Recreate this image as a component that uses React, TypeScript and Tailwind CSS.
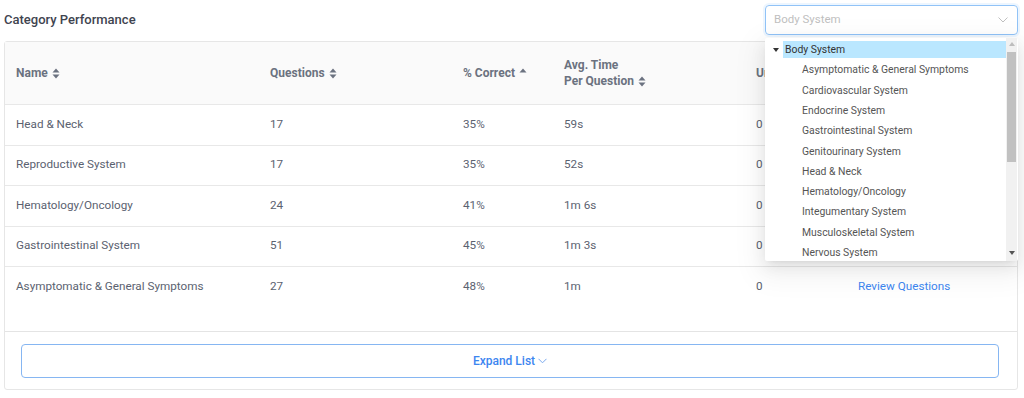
import React from "react";

const rows = [
  { name: "Head & Neck", q: "17", pct: "35%", time: "59s", un: "0" },
  { name: "Reproductive System", q: "17", pct: "35%", time: "52s", un: "0" },
  { name: "Hematology/Oncology", q: "24", pct: "41%", time: "1m 6s", un: "0" },
  { name: "Gastrointestinal System", q: "51", pct: "45%", time: "1m 3s", un: "0" },
  { name: "Asymptomatic & General Symptoms", q: "27", pct: "48%", time: "1m", un: "0" },
];

const options = [
  "Asymptomatic & General Symptoms",
  "Cardiovascular System",
  "Endocrine System",
  "Gastrointestinal System",
  "Genitourinary System",
  "Head & Neck",
  "Hematology/Oncology",
  "Integumentary System",
  "Musculoskeletal System",
  "Nervous System",
];

function SortIcon({ upOnly = false }: { upOnly?: boolean }) {
  return (
    <svg width="8" height="11" viewBox="0 0 8 11" className="ml-[4px] inline-block">
      <path d="M4 0.5 L7.5 4.5 L0.5 4.5 Z" fill="#6b7280" />
      {!upOnly && <path d="M4 10.5 L7.5 6.5 L0.5 6.5 Z" fill="#6b7280" />}
    </svg>
  );
}

const grid = "grid grid-cols-[253px_193px_101px_192px_102px_1fr]";

export default function App() {
  return (
    <div
      className="w-[1024px] h-[398px] bg-white overflow-hidden"
      style={{ fontFamily: "Roboto, 'Liberation Sans', sans-serif" }}
    >
      <div className="flex items-start justify-between pt-[5px] pr-[6px]">
        <div className="pl-[4px] h-[30px] flex items-center text-[13px] font-medium text-[#3f4450]">
          Category Performance
        </div>
        <div className="relative w-[253px]">
          <div className="h-[30px] rounded-[4px] border border-[#91c3f7] shadow-[0_0_0_2px_rgba(24,144,255,0.08)] flex items-center justify-between pl-[8px] pr-[9px]">
            <span className="text-[11.5px] text-[#bfbfbf]">Body System</span>
            <svg width="10" height="6" viewBox="0 0 10 6">
              <path d="M0.5 0.5 L5 5 L9.5 0.5" fill="none" stroke="#c0c0c0" strokeWidth="1" />
            </svg>
          </div>
          <div className="absolute left-0 top-[33px] z-10 w-[253px] h-[223px] bg-white rounded-[2px] shadow-[0_3px_6px_-4px_rgba(0,0,0,0.12),0_6px_16px_0_rgba(0,0,0,0.08),0_9px_28px_8px_rgba(0,0,0,0.05)] flex">
            <div className="flex-1 pt-[3px] pl-[5px]">
              <div className="flex items-center h-[17px]">
                <span className="w-[12px] flex justify-center">
                  <svg width="6" height="4" viewBox="0 0 6 4">
                    <path d="M0 0 L6 0 L3 4 Z" fill="#333" />
                  </svg>
                </span>
                <div className="ml-[1px] flex-1 h-[17px] bg-[#bae7ff] flex items-center pl-[2px] text-[10.4px] text-[#333]">
                  Body System
                </div>
              </div>
              <div className="pl-[32px] pt-[2px]">
                {options.map((o) => (
                  <div key={o} className="h-[20.3px] flex items-center text-[10.4px] text-[#555]">
                    {o}
                  </div>
                ))}
              </div>
            </div>
            <div className="w-[11px] h-full bg-[#f1f1f1] flex flex-col items-center mr-[1px]">
              <div className="h-[12px] flex items-center justify-center">
                <svg width="6" height="4" viewBox="0 0 6 4">
                  <path d="M3 0 L6 4 L0 4 Z" fill="#bdbdbd" />
                </svg>
              </div>
              <div className="w-[9px] h-[110px] bg-[#c1c1c1] mt-[2px]" />
              <div className="flex-1" />
              <div className="h-[12px] flex items-center justify-center mb-[2px]">
                <svg width="6" height="4" viewBox="0 0 6 4">
                  <path d="M0 0 L6 0 L3 4 Z" fill="#555" />
                </svg>
              </div>
            </div>
          </div>
        </div>
      </div>

      <div className="mt-[6px] ml-[4px] w-[1014px] border border-[#e6e6e6] rounded-[3px]">
        <div className={`${grid} h-[63px] bg-[#fafafa] border-b border-[#e8e8e8] items-center text-[12px] font-bold text-[#6b7280] leading-[16px]`}>
          <div className="pl-[11px] flex items-center">Name<SortIcon /></div>
          <div className="pl-[12px] flex items-center">Questions<SortIcon /></div>
          <div className="pl-[12px] flex items-center">% Correct<SortIcon upOnly /></div>
          <div className="pl-[12px]">
            <div>Avg. Time</div>
            <div className="flex items-center">Per Question<SortIcon /></div>
          </div>
          <div className="pl-[12px]">Unused</div>
          <div className="pl-[12px]"></div>
        </div>
        <div className="h-[226px]">
          {rows.map((r, i) => (
            <div
              key={r.name}
              className={`${grid} h-[40.5px] items-center text-[11.7px] text-[#5b6270] ${i < rows.length - 1 ? "border-b border-[#e8e8e8]" : ""}`}
            >
              <div className="pl-[11px]">{r.name}</div>
              <div className="pl-[12px]">{r.q}</div>
              <div className="pl-[12px]">{r.pct}</div>
              <div className="pl-[12px]">{r.time}</div>
              <div className="pl-[12px]">{r.un}</div>
              <div className="pl-[12px] text-[#3d86f0]">Review Questions</div>
            </div>
          ))}
        </div>
        <div className="border-t border-[#e4e4e4] pt-[12px] pb-[11px] pl-[16px] pr-[18px]">
          <div className="h-[34px] rounded-[4px] border border-[#86b6f2] flex items-center justify-center gap-[3px] text-[12px] font-medium text-[#3d86f0]">
            Expand List
            <svg width="9" height="6" viewBox="0 0 9 6">
              <path d="M0.5 0.8 L4.5 4.8 L8.5 0.8" fill="none" stroke="#7aa9ee" strokeWidth="1" />
            </svg>
          </div>
        </div>
      </div>
    </div>
  );
}
